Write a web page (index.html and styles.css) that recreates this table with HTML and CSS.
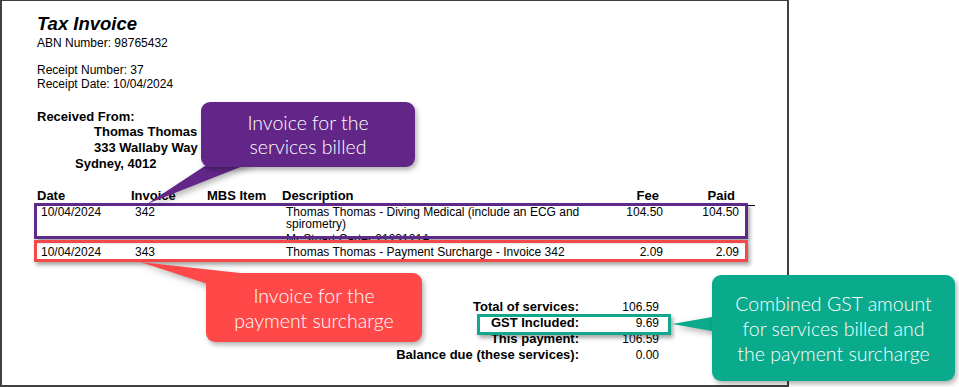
FILE: index.html
```html
<!DOCTYPE html>
<html lang="en">
<head>
<meta charset="utf-8">
<title>Tax Invoice</title>
<link rel="stylesheet" href="styles.css">
</head>
<body>
<div class="page">
  <h1 class="title">Tax Invoice</h1>
  <div class="abn">ABN Number: 98765432</div>
  <div class="receipt">
    <div>Receipt Number: 37</div>
    <div>Receipt Date: 10/04/2024</div>
  </div>
  <div class="from">
    <div>Received From:</div>
    <div class="addr-name">Thomas Thomas</div>
    <div class="addr-name">333 Wallaby Way</div>
    <div class="addr-city">Sydney, 4012</div>
  </div>
  <div class="items">
    <div class="row head">
      <div>Date</div><div>Invoice</div><div>MBS Item</div><div>Description</div><div class="num">Fee</div><div class="num">Paid</div>
    </div>
    <div class="row item">
      <div>10/04/2024</div><div>342</div><div></div>
      <div class="desc"><span class="line">Thomas Thomas - Diving Medical (include an ECG and</span><span class="line">spirometry)</span><span class="line line-doctor">Mr Stuart Carter 2123121A</span></div>
      <div class="num">104.50</div><div class="num">104.50</div>
    </div>
    <div class="row item item-second">
      <div>10/04/2024</div><div>343</div><div></div>
      <div class="desc">Thomas Thomas - Payment Surcharge - Invoice 342</div>
      <div class="num">2.09</div><div class="num">2.09</div>
    </div>
  </div>
  <div class="totals">
    <div class="t-label">Total of services:</div><div class="t-val">106.59</div>
    <div class="t-label">GST Included:</div><div class="t-val">9.69</div>
    <div class="t-label">This payment:</div><div class="t-val">106.59</div>
    <div class="t-label">Balance due (these services):</div><div class="t-val">0.00</div>
  </div>
</div>

<div class="hl hl-purple"></div>
<div class="hl hl-red"></div>
<div class="hl hl-teal"></div>

<svg class="pointers" width="959" height="387" viewBox="0 0 959 387" aria-hidden="true">
  <polygon class="ptr-purple" points="214,160 258,160 147,204"/>
  <polygon class="ptr-red" points="140,262 240,273 214,286"/>
  <polygon class="ptr-teal" points="672,324 718,316 718,332"/>
</svg>

<div class="callout callout-purple">Invoice for the<br>services billed</div>
<div class="callout callout-red">Invoice for the<br>payment surcharge</div>
<div class="callout callout-teal">Combined GST amount<br>for services billed and<br>the payment surcharge</div>
</body>
</html>
```

FILE: styles.css
```css
html, body {
  margin: 0;
  padding: 0;
  background: #ffffff;
}

body {
  position: relative;
  width: 959px;
  height: 387px;
  overflow: hidden;
  font-family: "Liberation Sans", Arial, sans-serif;
  color: #000;
}

.page {
  box-sizing: border-box;
  width: 789px;
  height: 387px;
  border-style: solid;
  border-color: #404040;
  border-width: 1px 2px 2px 2px;
  padding: 13px 0 0 35px;
  background: #fff;
}

.title {
  margin: 0;
  font-size: 18.5px;
  line-height: 20px;
  font-weight: bold;
  font-style: italic;
}

.abn {
  margin-top: 2px;
  font-size: 12px;
  line-height: 14px;
}

.receipt {
  margin-top: 13px;
  font-size: 12px;
  line-height: 14px;
}

.from {
  margin-top: 17.6px;
  font-size: 13px;
  font-weight: bold;
  line-height: 15.75px;
}

.addr-name { padding-left: 57px; }
.addr-city { padding-left: 38px; }

.items {
  margin-top: 16px;
}

.row {
  display: grid;
  grid-template-columns: 94px 76px 75px 300px 77px 76px;
}

.head {
  width: 698px;
  padding-right: 20px;
  padding-bottom: 1px;
  border-bottom: 1px solid #000;
  font-size: 13px;
  font-weight: bold;
  line-height: 16px;
}

.item {
  padding-left: 4px;
  font-size: 12px;
  line-height: 12px;
}

.item-second {
  margin-top: 1.3px;
}

.desc .line { display: block; }
.desc .line-doctor { margin-top: 3px; }

.num { text-align: right; }

.totals {
  display: grid;
  grid-template-columns: 242px 80px;
  align-items: baseline;
  margin-top: 41.4px;
  margin-left: 300px;
}

.t-label {
  text-align: right;
  font-size: 13px;
  font-weight: bold;
  line-height: 16px;
}

.t-val {
  text-align: right;
  font-size: 12px;
  line-height: 16px;
}

/* annotations overlaid on the document */
.hl {
  position: absolute;
  box-sizing: border-box;
  border: 3px solid;
  box-shadow: 2px 3px 4px rgba(0, 0, 0, 0.35);
}

.hl-purple {
  left: 34px;
  top: 203px;
  width: 714px;
  height: 36px;
  border-color: #5e2a8a;
}

.hl-red {
  left: 34px;
  top: 240px;
  width: 714px;
  height: 22px;
  border-color: #f54848;
}

.hl-teal {
  left: 477px;
  top: 314px;
  width: 194px;
  height: 21px;
  border-color: #13a88b;
}

.pointers {
  position: absolute;
  left: 0;
  top: 0;
  filter: drop-shadow(2px 3px 3px rgba(0, 0, 0, 0.3));
}

.ptr-purple { fill: #622688; }
.ptr-red { fill: #ff4848; }
.ptr-teal { fill: #0aaa8c; }

.callout {
  position: absolute;
  box-sizing: border-box;
  display: flex;
  align-items: center;
  justify-content: center;
  text-align: center;
  border-radius: 9px;
  color: #fff;
  font-family: Lato, "Open Sans", sans-serif;
  font-size: 19.5px;
  font-weight: 300;
  box-shadow: 2px 3px 5px rgba(0, 0, 0, 0.3);
}

.callout-purple {
  left: 201px;
  top: 102px;
  width: 214px;
  height: 65px;
  line-height: 24px;
  background: #622688;
}

.callout-red {
  left: 206px;
  top: 273px;
  width: 216px;
  height: 69px;
  line-height: 25px;
  background: #ff4848;
}

.callout-teal {
  left: 712px;
  top: 275px;
  width: 243px;
  height: 106px;
  line-height: 25px;
  background: #0aaa8c;
}
```
